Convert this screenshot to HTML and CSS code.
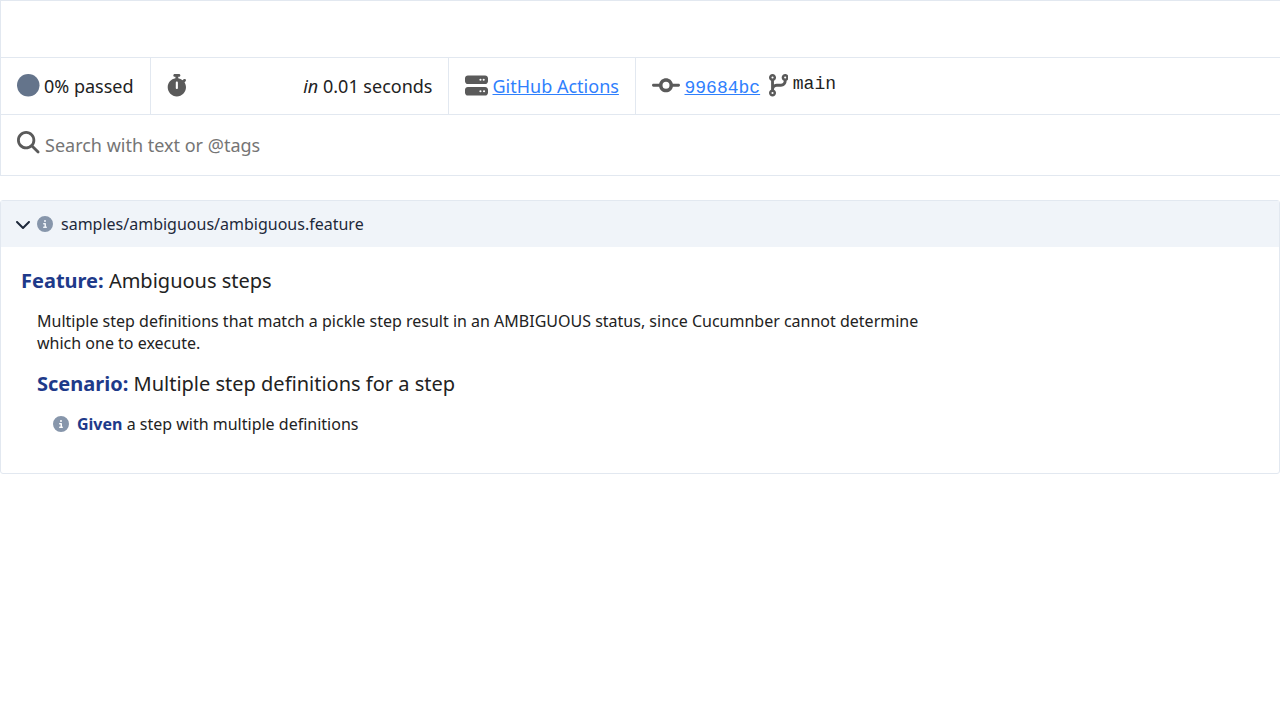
FILE: index.html
```html
<!DOCTYPE html>
<html lang="en">
<head>
<meta charset="utf-8">
<title>Cucumber report</title>
<link rel="stylesheet" href="styles.css">
</head>
<body>
<header class="summary">
  <div class="row row-empty"></div>
  <div class="row row-stats">
    <div class="cell cell-status">
      <svg class="icon status" viewBox="0 0 512 512"><circle cx="256" cy="256" r="256"/></svg>
      <span>0% passed</span>
    </div>
    <div class="cell cell-time">
      <svg class="icon icon-narrow" viewBox="0 0 448 512"><path d="M176 0c-17.7 0-32 14.3-32 32s14.3 32 32 32h16V98.4C92.3 113.8 16 200 16 304c0 114.900 93.100 208 208 208s208-93.100 208-208c0-41.800-12.300-80.700-33.500-113.200l24.100-24.100c12.500-12.500 12.500-32.800 0-45.300s-32.800-12.500-45.300 0L355.700 143c-28.100-23-62.200-38.800-99.700-44.600V64h16c17.700 0 32-14.300 32-32s-14.300-32-32-32H224 176zm72 192V320c0 13.300-10.700 24-24 24s-24-10.700-24-24V192c0-13.300 10.700-24 24-24s24 10.700 24 24z"/></svg>
      <span class="duration"><i>in</i> 0.01 seconds</span>
    </div>
    <div class="cell cell-ci">
      <svg class="icon" viewBox="0 0 512 512"><path d="M64 32C28.700 32 0 60.700 0 96v64c0 35.300 28.700 64 64 64H448c35.300 0 64-28.700 64-64V96c0-35.300-28.700-64-64-64H64zm280 72a24 24 0 1 1 0 48 24 24 0 1 1 0-48zm48 24a24 24 0 1 1 48 0 24 24 0 1 1 -48 0zM64 288c-35.300 0-64 28.700-64 64v64c0 35.300 28.700 64 64 64H448c35.300 0 64-28.700 64-64V352c0-35.300-28.700-64-64-64H64zm280 72a24 24 0 1 1 0 48 24 24 0 1 1 0-48zm56 24a24 24 0 1 1 48 0 24 24 0 1 1 -48 0z"/></svg>
      <a href="#">GitHub Actions</a>
    </div>
    <div class="cell cell-git">
      <svg class="icon icon-wide" viewBox="0 0 640 512"><path d="M320 336a80 80 0 1 0 0-160 80 80 0 1 0 0 160zm156.800-48C462 361 397.400 416 320 416s-142-55-156.800-128H32c-17.700 0-32-14.300-32-32s14.300-32 32-32H163.200C178 151 242.600 96 320 96s142 55 156.800 128H608c17.700 0 32 14.300 32 32s-14.300 32-32 32H476.800z"/></svg>
      <a class="code hash" href="#">99684bc</a>
      <svg class="icon icon-narrow icon-branch" viewBox="0 0 448 512"><path d="M80 104a24 24 0 1 0 0-48 24 24 0 1 0 0 48zm80-24c0 32.800-19.700 61-48 73.300v87.800c18.800-10.900 40.700-17.100 64-17.100h96c35.300 0 64-28.700 64-64v-6.700C307.700 141 288 112.800 288 80c0-44.200 35.800-80 80-80s80 35.800 80 80c0 32.800-19.700 61-48 73.300V160c0 70.700-57.300 128-128 128H176c-35.300 0-64 28.700-64 64v6.700c28.300 12.300 48 40.500 48 73.300c0 44.200-35.800 80-80 80s-80-35.800-80-80c0-32.800 19.700-61 48-73.300V352 153.300C19.700 141 0 112.800 0 80C0 35.800 35.800 0 80 0s80 35.800 80 80zm232 0a24 24 0 1 0 -48 0 24 24 0 1 0 48 0zM80 456a24 24 0 1 0 0-48 24 24 0 1 0 0 48z"/></svg>
      <span class="code branch">main</span>
    </div>
  </div>
  <div class="row row-search">
    <svg class="icon" viewBox="0 0 512 512"><path d="M416 208c0 45.900-14.900 88.300-40 122.700L502.600 457.400c12.500 12.500 12.500 32.800 0 45.300s-32.800 12.500-45.300 0L330.700 376c-34.400 25.200-76.800 40-122.700 40C93.100 416 0 322.900 0 208S93.100 0 208 0S416 93.100 416 208zM208 352a144 144 0 1 0 0-288 144 144 0 1 0 0 288z"/></svg>
    <input class="search" type="text" placeholder="Search with text or @tags">
  </div>
</header>
<main class="document">
  <div class="document-header">
    <svg class="chevron" viewBox="0 0 512 512"><path d="M233.400 406.600c12.500 12.500 32.800 12.500 45.300 0l192-192c12.500-12.500 12.500-32.800 0-45.300s-32.800-12.500-45.300 0L256 338.700 86.600 169.400c-12.500-12.500-32.800-12.500-45.300 0s-12.500 32.800 0 45.300l192 192z"/></svg>
    <svg class="info" viewBox="0 0 512 512"><path d="M256 512A256 256 0 1 0 256 0a256 256 0 1 0 0 512zM216 336h24V272H216c-13.300 0-24-10.700-24-24s10.700-24 24-24h48c13.300 0 24 10.700 24 24v88h8c13.300 0 24 10.700 24 24s-10.700 24-24 24H216c-13.300 0-24-10.700-24-24s10.700-24 24-24zm40-208a32 32 0 1 1 0 64 32 32 0 1 1 0-64z"/></svg>
    <span>samples/ambiguous/ambiguous.feature</span>
  </div>
  <section class="feature">
    <h1 class="title"><b class="keyword">Feature:</b> Ambiguous steps</h1>
    <div class="children">
      <p class="description">Multiple step definitions that match a pickle step result in an AMBIGUOUS status, since Cucumnber cannot determine which one to execute.</p>
      <h2 class="title"><b class="keyword">Scenario:</b> Multiple step definitions for a step</h2>
      <div class="step">
        <svg class="info" viewBox="0 0 512 512"><path d="M256 512A256 256 0 1 0 256 0a256 256 0 1 0 0 512zM216 336h24V272H216c-13.300 0-24-10.700-24-24s10.700-24 24-24h48c13.300 0 24 10.700 24 24v88h8c13.300 0 24 10.700 24 24s-10.700 24-24 24H216c-13.300 0-24-10.700-24-24s10.700-24 24-24zm40-208a32 32 0 1 1 0 64 32 32 0 1 1 0-64z"/></svg>
        <span><b class="keyword">Given</b> a step with multiple definitions</span>
      </div>
    </div>
  </section>
</main>
</body>
</html>
```
FILE: styles.css
```css
* { box-sizing: border-box; }
body {
  margin: 0;
  background: #fff;
  color: #222;
  font: 16px/22px "Noto Sans", sans-serif;
  overflow: hidden;
}
.summary {
  border-left: 1px solid #e2e8f0;
  font-size: 18px;
  line-height: 25px;
}
.row { border-top: 1px solid #e2e8f0; display: flex; }
.row-empty { height: 57px; }
.row-stats { height: 57px; }
.cell {
  display: flex;
  align-items: flex-start;
  gap: 4.5px;
  padding: 16px;
  border-right: 1px solid #e2e8f0;
  white-space: nowrap;
}
.cell-status { width: 150px; }
.cell-time { width: 298px; padding-right: 15.5px; justify-content: space-between; }
.cell-ci { width: 187px; }
.cell-git { border-right: 0; }
.icon { width: 22.5px; height: 22.5px; flex: none; fill: #5a5a5a; }
.cell-ci .icon { width: 23px; height: 23px; }
.icon-narrow { width: 19.7px; }
.icon-wide { width: 28px; }
.icon-branch { margin-left: 4px; }
.status { fill: #64748b; }
.summary a { color: #2f80fd; text-decoration: underline; }
.code { font-family: "Liberation Mono", monospace; }
.hash { margin-top: 2px; }
.branch { margin-top: -2px; }
.row-search {
  height: 62px;
  padding: 16px;
  gap: 5.5px;
  border-bottom: 1px solid #e2e8f0;
}
.search {
  flex: 1;
  height: 27px;
  border: 0;
  padding: 0;
  outline: 0;
  background: none;
  font: inherit;
}
.search::placeholder { color: #757575; }
.document {
  margin-top: 24px;
  border: 1px solid #e2e8f0;
  border-radius: 3px;
}
.document-header {
  display: flex;
  align-items: center;
  height: 46px;
  padding: 0 14px;
  background: #f0f4f9;
  color: #1e293b;
}
.chevron { width: 16px; height: 16px; fill: #1e293b; margin-right: 6px; }
.info { width: 16px; height: 16px; flex: none; fill: #8796ab; margin-right: 8px; }
.feature { padding: 20px 20px 38px; }
.title { margin: 0; font-size: 20px; line-height: 28px; font-weight: 400; }
.keyword { color: #1e3a8a; font-weight: 700; }
.children { padding-left: 16px; }
.description { margin: 15px 0 16px; max-width: 900px; }
.step { display: flex; align-items: center; margin-top: 15px; padding-left: 16px; }
```
